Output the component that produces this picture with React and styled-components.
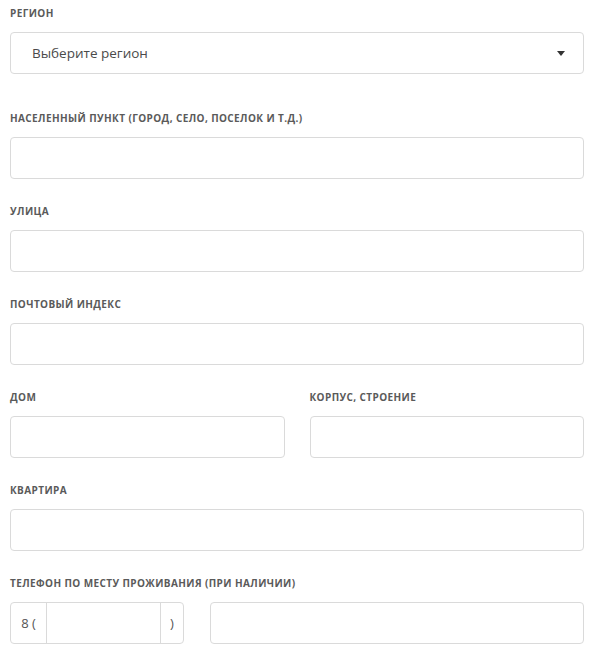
import styled, { createGlobalStyle } from "styled-components";

const Global = createGlobalStyle`
  body {
    margin: 0;
    background: #fff;
    font-family: "Open Sans", "Liberation Sans", sans-serif;
  }
`;

const Form = styled.div`
  width: 574px;
  padding: 7px 0 0 10px;
`;

const Field = styled.div`
  margin-bottom: ${(p) => (p.$extra ? "38px" : "26px")};
`;

const Row = styled.div`
  display: grid;
  grid-template-columns: 1fr 1fr;
  column-gap: 25px;
`;

const Label = styled.div`
  font-size: 10px;
  line-height: 13px;
  font-weight: 700;
  letter-spacing: 0.4px;
  text-transform: uppercase;
  color: #5a5a5a;
  margin-bottom: 12px;
  white-space: nowrap;
`;

const Input = styled.input`
  display: block;
  box-sizing: border-box;
  width: 100%;
  height: 42px;
  border: 1px solid #dadada;
  border-radius: 4px;
  background: #fff;
  padding: 0 12px;
  font-family: inherit;
  font-size: 14px;
  outline: none;
`;

const Select = styled.div`
  box-sizing: border-box;
  height: 42px;
  border: 1px solid #dadada;
  border-radius: 4px;
  display: flex;
  align-items: center;
  justify-content: space-between;
  padding: 0 18px 0 21px;
  font-size: 13.5px;
  color: #4a4a4a;
`;

const Caret = styled.span`
  width: 0;
  height: 0;
  border-left: 4px solid transparent;
  border-right: 4px solid transparent;
  border-top: 5px solid #333;
`;

const PhoneRow = styled.div`
  display: grid;
  grid-template-columns: 174px 1fr;
  column-gap: 26px;
`;

const PhoneGroup = styled.div`
  box-sizing: border-box;
  height: 42px;
  border: 1px solid #dadada;
  border-radius: 4px;
  display: grid;
  grid-template-columns: 36px 1fr 23px;
  overflow: hidden;
`;

const Addon = styled.span`
  display: flex;
  align-items: center;
  justify-content: center;
  font-size: 13px;
  color: #555;
  border-right: ${(p) => (p.$divider ? "1px solid #dadada" : "none")};
  border-left: ${(p) => (p.$left ? "1px solid #dadada" : "none")};
`;

const Bare = styled.input`
  border: none;
  outline: none;
  min-width: 0;
  padding: 0 8px;
  font-family: inherit;
  font-size: 14px;
  background: transparent;
`;

export default function App() {
  return (
    <>
      <Global />
      <Form>
        <Field $extra>
          <Label>Регион</Label>
          <Select>
            <span>Выберите регион</span>
            <Caret />
          </Select>
        </Field>
        <Field>
          <Label>Населенный пункт (город, село, поселок и т.д.)</Label>
          <Input />
        </Field>
        <Field>
          <Label>Улица</Label>
          <Input />
        </Field>
        <Field>
          <Label>Почтовый индекс</Label>
          <Input />
        </Field>
        <Row>
          <Field>
            <Label>Дом</Label>
            <Input />
          </Field>
          <Field>
            <Label>Корпус, строение</Label>
            <Input />
          </Field>
        </Row>
        <Field>
          <Label>Квартира</Label>
          <Input />
        </Field>
        <Field>
          <Label>Телефон по месту проживания (при наличии)</Label>
          <PhoneRow>
            <PhoneGroup>
              <Addon $divider>8 (</Addon>
              <Bare />
              <Addon $left>)</Addon>
            </PhoneGroup>
            <Input />
          </PhoneRow>
        </Field>
      </Form>
    </>
  );
}
